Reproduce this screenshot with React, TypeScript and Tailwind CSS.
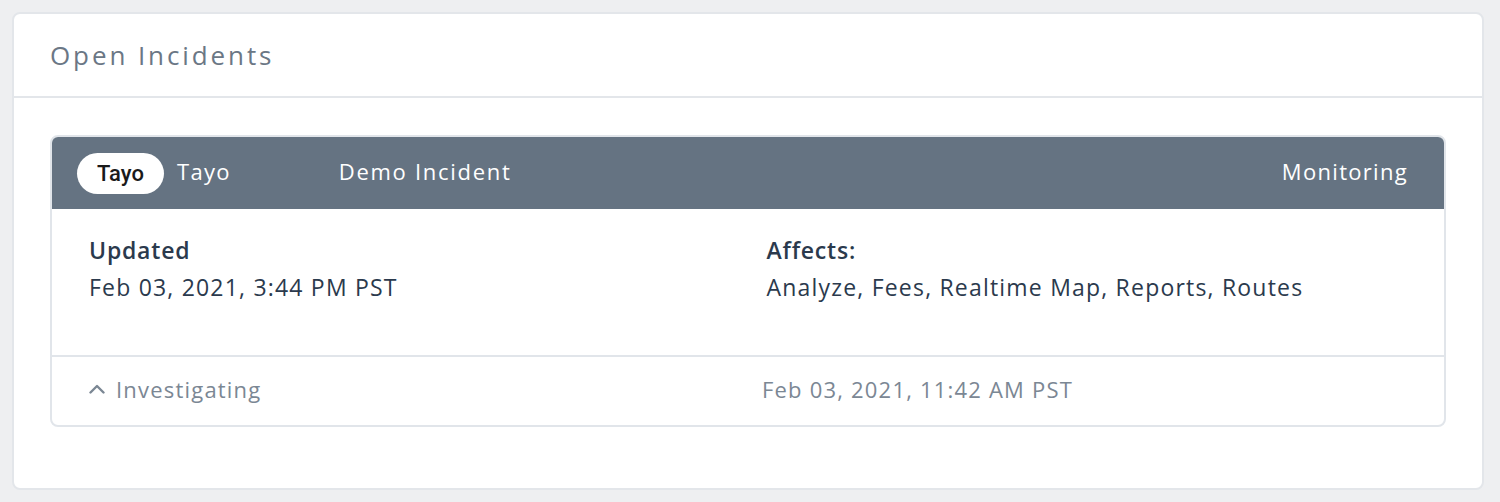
const font = { fontFamily: "'Open Sans', sans-serif" };

function ChevronUp() {
  return (
    <svg width="16" height="10" viewBox="0 0 16 10" fill="none" className="shrink-0">
      <polyline
        points="1.5,8.5 8,2 14.5,8.5"
        stroke="#7b8794"
        strokeWidth="2.4"
        strokeLinecap="round"
        strokeLinejoin="round"
      />
    </svg>
  );
}

export default function App() {
  return (
    <div
      className="w-[1500px] h-[502px] bg-[#eeeff1] pt-[12px] pl-[12px] pr-[16px]"
      style={font}
    >
      <div className="h-[478px] bg-white border-2 border-[#e3e6ea] rounded-[8px]">
        {/* Title */}
        <div className="h-[84px] border-b-2 border-[#e3e6ea] flex items-center pl-[36px]">
          <h2 className="text-[26px] text-[#6b7785] tracking-[2.9px]">Open Incidents</h2>
        </div>

        {/* Incident card */}
        <div className="mt-[37px] mx-[36px] border-2 border-[#e1e5ea] rounded-[8px] overflow-hidden">
          <div className="h-[72px] bg-[#657382] flex items-center pl-[25px] pr-[36px] pb-[3px] text-[22px] text-white tracking-[1.3px]">
            <span
              className="h-[41px] w-[87px] mt-[3px] rounded-full bg-white flex items-center justify-center text-[22px] text-[#1a1a1a] font-medium tracking-normal"
              style={{ fontFamily: "Roboto, Arial, sans-serif" }}
            >
              Tayo
            </span>
            <span className="ml-[13px]">Tayo</span>
            <span className="ml-[108px] tracking-[1.7px]">Demo Incident</span>
            <span className="ml-auto">Monitoring</span>
          </div>

          <div className="h-[148px] border-b-2 border-[#e1e5ea] grid grid-cols-2 content-start pl-[37px] pt-[24px] text-[23px] text-[#2b3a4d] tracking-[1.2px]">
            <div>
              <div className="font-semibold tracking-[0.8px]">Updated</div>
              <div className="mt-[2px]">Feb 03, 2021, 3:44 PM PST</div>
            </div>
            <div>
              <div className="font-semibold tracking-[0.8px]">Affects:</div>
              <div className="mt-[2px]">Analyze, Fees, Realtime Map, Reports, Routes</div>
            </div>
          </div>

          <div className="h-[68px] pb-[4px] grid grid-cols-[673px_1fr] items-center pl-[37px] text-[22px] text-[#7b8794] tracking-[1.2px]">
            <div className="flex items-center gap-[11px]">
              <ChevronUp />
              Investigating
            </div>
            <div>Feb 03, 2021, 11:42 AM PST</div>
          </div>
        </div>
      </div>
    </div>
  );
}
